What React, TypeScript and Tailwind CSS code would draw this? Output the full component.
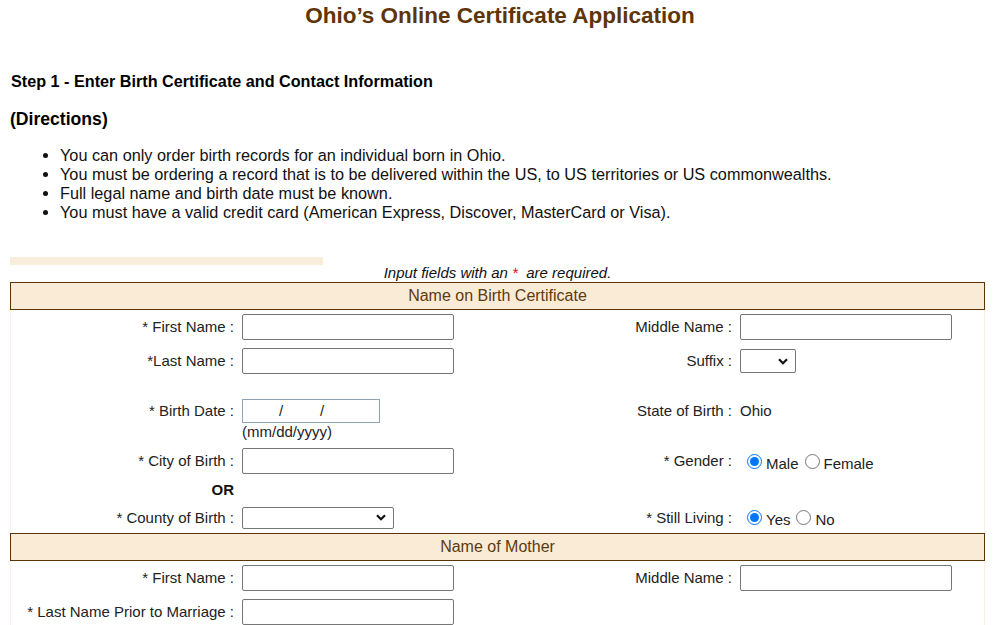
import React from "react";

const labelCls = "text-right pr-[4px] text-[15px] leading-[18px] text-[#222]";

function TextBox({ w = 212, h = 26 }: { w?: number; h?: number }) {
  return (
    <div
      className="border border-[#767676] rounded-[2px] bg-white"
      style={{ width: w, height: h }}
    />
  );
}

function SelectBox({ w, h }: { w: number; h: number }) {
  return (
    <div
      className="border border-[#767676] rounded-[2px] bg-white flex items-center justify-end pr-[7px]"
      style={{ width: w, height: h }}
    >
      <svg width="10" height="7" viewBox="0 0 10 7">
        <path d="M1 1.2 L5 5.2 L9 1.2" fill="none" stroke="#111" strokeWidth="2.2" />
      </svg>
    </div>
  );
}

function Radio({ checked }: { checked?: boolean }) {
  return (
    <input
      type="radio"
      defaultChecked={checked}
      className="w-[15px] h-[15px] ml-[6px] mr-[4px] mt-[3px] align-baseline"
    />
  );
}

function Header({ children }: { children: React.ReactNode }) {
  return (
    <div className="h-[28px] border border-[#5c3306] bg-[#faebd6] flex items-center justify-center text-[16px] text-[#5c3a12] -mx-[1px]">
      {children}
    </div>
  );
}

export default function App() {
  return (
    <div className="w-[1000px] min-h-[625px] bg-white text-black font-['Liberation_Sans',Arial,sans-serif]">
      <h1 className="pt-[3px] text-center text-[22.5px] leading-[26px] font-bold text-[#5e3408]">
        Ohio’s Online Certificate Application
      </h1>
      <div className="mt-[43px] pl-[11px] text-[16.2px] leading-[18px] font-bold">
        Step 1 - Enter Birth Certificate and Contact Information
      </div>
      <div className="mt-[19px] pl-[10px] text-[17.6px] leading-[21px] font-bold">(Directions)</div>
      <ul className="mt-[16px] ml-[60px] list-disc text-[16.25px] leading-[19px] text-[#111]">
        <li>You can only order birth records for an individual born in Ohio.</li>
        <li>You must be ordering a record that is to be delivered within the US, to US territories or US commonwealths.</li>
        <li>Full legal name and birth date must be known.</li>
        <li>You must have a valid credit card (American Express, Discover, MasterCard or Visa).</li>
      </ul>
      <div className="mt-[35px] ml-[10px] w-[313px] h-[8px] bg-[#f9eedc]" />
      <div className="ml-[10px] w-[975px]">
        <div className="text-center italic text-[15px] leading-[16px] text-[#111]">
          Input fields with an <span className="text-red-600">*</span>&nbsp; are required.
        </div>
        <div className="mt-[1px] border-l border-r border-[#fbf1e2]">
          <Header>Name on Birth Certificate</Header>

          <div className="grid grid-cols-[227px_250px_248px_1fr] h-[34px] items-center">
            <div className={labelCls}>* First Name :</div>
            <div className="pl-[4px]"><TextBox /></div>
            <div className={labelCls}>Middle Name :</div>
            <div className="pl-[4px]"><TextBox /></div>
          </div>
          <div className="grid grid-cols-[227px_250px_248px_1fr] h-[34px] items-center">
            <div className={labelCls}>*Last Name :</div>
            <div className="pl-[4px]"><TextBox /></div>
            <div className={labelCls}>Suffix :</div>
            <div className="pl-[4px]"><SelectBox w={56} h={24} /></div>
          </div>
          <div className="h-[17px]" />
          <div className="grid grid-cols-[227px_250px_248px_1fr] h-[49px] items-start">
            <div className={labelCls + " pt-[7px]"}>* Birth Date :</div>
            <div className="pl-[4px] pt-[4px]">
              <div className="w-[138px] h-[24px] border border-[#8ea3b5] bg-white relative text-[15px] leading-[20px] text-[#222]">
                <span className="absolute left-[36px] top-[1px]">/</span>
                <span className="absolute left-[77px] top-[1px]">/</span>
              </div>
              <div className="text-[15px] leading-[18px] text-[#222]">(mm/dd/yyyy)</div>
            </div>
            <div className={labelCls + " pt-[7px]"}>State of Birth :</div>
            <div className="pl-[4px] pt-[7px] text-[15px] leading-[18px] text-[#222]">Ohio</div>
          </div>
          <div className="grid grid-cols-[227px_250px_248px_1fr] h-[34px] items-center">
            <div className={labelCls}>* City of Birth :</div>
            <div className="pl-[4px]"><TextBox /></div>
            <div className={labelCls}>* Gender :</div>
            <div className="pl-[5px] text-[15px] leading-[20px] text-[#222] pt-[2px]">
              <label><Radio checked />Male</label>
              <label><Radio />Female</label>
            </div>
          </div>
          <div className="grid grid-cols-[227px_250px_248px_1fr] h-[24px] items-center">
            <div className="text-right pr-[4px] text-[15px] leading-[18px] font-bold text-[#111]">OR</div>
            <div />
            <div />
            <div />
          </div>
          <div className="grid grid-cols-[227px_250px_248px_1fr] h-[31px] items-center">
            <div className={labelCls}>* County of Birth :</div>
            <div className="pl-[4px]"><SelectBox w={152} h={22} /></div>
            <div className={labelCls}>* Still Living :</div>
            <div className="pl-[5px] text-[15px] leading-[20px] text-[#222] pt-[2px]">
              <label><Radio checked />Yes</label>
              <label><Radio />No</label>
            </div>
          </div>

          <Header>Name of Mother</Header>
          <div className="grid grid-cols-[227px_250px_248px_1fr] h-[34px] items-center">
            <div className={labelCls}>* First Name :</div>
            <div className="pl-[4px]"><TextBox /></div>
            <div className={labelCls}>Middle Name :</div>
            <div className="pl-[4px]"><TextBox /></div>
          </div>
          <div className="grid grid-cols-[227px_250px_248px_1fr] h-[34px] items-center">
            <div className={labelCls}>* Last Name Prior to Marriage :</div>
            <div className="pl-[4px]"><TextBox /></div>
            <div />
            <div />
          </div>
        </div>
      </div>
    </div>
  );
}
